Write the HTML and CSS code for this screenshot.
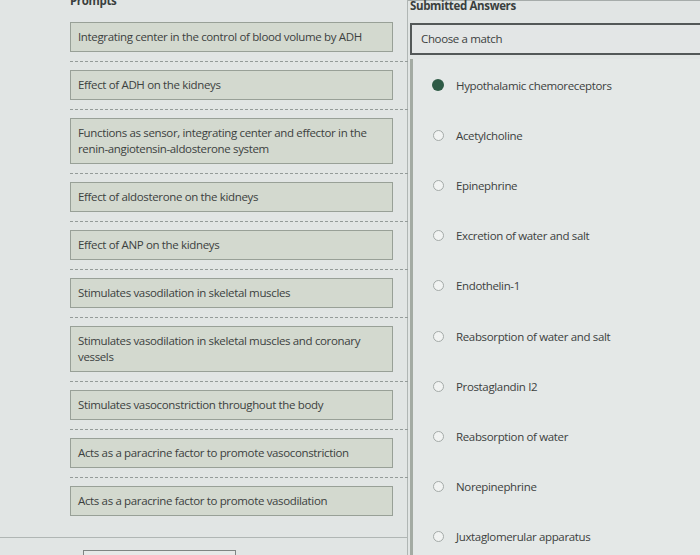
FILE: index.html
```html
<!DOCTYPE html>
<html lang="en">
<head>
<meta charset="utf-8">
<title>Matching</title>
<link rel="stylesheet" href="styles.css">
</head>
<body>
<div class="page">
  <section class="prompts">
    <h2 class="col-title prompts-title">Prompts</h2>
    <div class="row"><div class="prompt">Integrating center in the control of blood volume by ADH</div></div>
    <div class="row"><div class="prompt">Effect of ADH on the kidneys</div></div>
    <div class="row"><div class="prompt">Functions as sensor, integrating center and effector in the renin-angiotensin-aldosterone system</div></div>
    <div class="row"><div class="prompt">Effect of aldosterone on the kidneys</div></div>
    <div class="row"><div class="prompt">Effect of ANP on the kidneys</div></div>
    <div class="row"><div class="prompt">Stimulates vasodilation in skeletal muscles</div></div>
    <div class="row"><div class="prompt">Stimulates vasodilation in skeletal muscles and coronary vessels</div></div>
    <div class="row"><div class="prompt">Stimulates vasoconstriction throughout the body</div></div>
    <div class="row"><div class="prompt">Acts as a paracrine factor to promote vasoconstriction</div></div>
    <div class="row last"><div class="prompt">Acts as a paracrine factor to promote vasodilation</div></div>
    <div class="footer">
      <div class="footer-box"></div>
    </div>
  </section>
  <section class="answers">
    <h2 class="col-title answers-title">Submitted Answers</h2>
    <div class="select">Choose a match</div>
    <ul class="menu">
      <li class="option"><span class="radio selected"></span>Hypothalamic chemoreceptors</li>
      <li class="option"><span class="radio"></span>Acetylcholine</li>
      <li class="option"><span class="radio"></span>Epinephrine</li>
      <li class="option"><span class="radio"></span>Excretion of water and salt</li>
      <li class="option"><span class="radio"></span>Endothelin-1</li>
      <li class="option"><span class="radio"></span>Reabsorption of water and salt</li>
      <li class="option"><span class="radio"></span>Prostaglandin I2</li>
      <li class="option"><span class="radio"></span>Reabsorption of water</li>
      <li class="option"><span class="radio"></span>Norepinephrine</li>
      <li class="option"><span class="radio"></span>Juxtaglomerular apparatus</li>
    </ul>
  </section>
</div>
</body>
</html>
```
FILE: styles.css
```css
* { box-sizing: border-box; }
html, body {
  margin: 0;
  padding: 0;
  background: #e1e5e4;
  overflow: hidden;
}
body {
  font-family: "Open Sans", "Liberation Sans", sans-serif;
  color: #3c4140;
  font-size: 11.5px;
  letter-spacing: -0.35px;
  width: 700px;
  height: 555px;
}
.page {
  display: grid;
  grid-template-columns: 408px 292px;
  height: 555px;
  position: relative;
}
.col-title {
  margin: 0;
  font-size: 11.5px;
  font-weight: 700;
  color: #3a3f3e;
  line-height: 14px;
}
.prompts {
  padding-left: 70px;
  border-right: 1px solid #b0b6b4;
}
.prompts-title {
  margin-top: -6px;
  height: 28px;
}
.row {
  margin-right: -1px;
  padding-bottom: 9px;
  border-bottom: 1px dashed #949b99;
  margin-bottom: 8px;
}
.row.last {
  border-bottom: none;
  padding-bottom: 0;
  margin-bottom: 0;
}
.prompt {
  width: 323px;
  background: #d3d9cf;
  border: 1px solid #98a097;
  padding: 6px 18px 6px 7px;
  line-height: 16px;
}
.footer {
  margin-left: -70px;
  margin-top: 21px;
  border-top: 1px solid #b0b6b4;
  padding: 12px 0 0 83px;
}
.footer-box {
  width: 153px;
  height: 20px;
  border: 1px solid #7f8583;
  border-bottom: none;
  background: #e6e9e8;
}
.answers {
  padding-left: 2px;
  border-top: 1px solid #a6acaa;
}
.answers-title {
  margin-top: -2px;
  height: 24px;
}
.select {
  height: 32px;
  border: 2px solid #535858;
  border-right: none;
  background: #e3e6e6;
  padding: 7px 0 0 9px;
  line-height: 14px;
}
.menu {
  list-style: none;
  margin: 4px 0 0 0;
  padding: 1px 0 0 0;
  border-left: 3px solid #a3aba3;
  background: #e4e8e7;
  height: 520px;
}
.option {
  height: 50.2px;
  display: flex;
  align-items: center;
  padding-left: 20px;
}
.radio {
  width: 11px;
  height: 11px;
  border-radius: 50%;
  border: 1.5px solid #a4aaa8;
  background: #f1f3f2;
  margin-right: 12px;
  flex: none;
}
.radio.selected {
  width: 12px;
  height: 12px;
  margin-left: -1px;
  margin-right: 12px;
  border: none;
  background: #2e5b46;
}
```
